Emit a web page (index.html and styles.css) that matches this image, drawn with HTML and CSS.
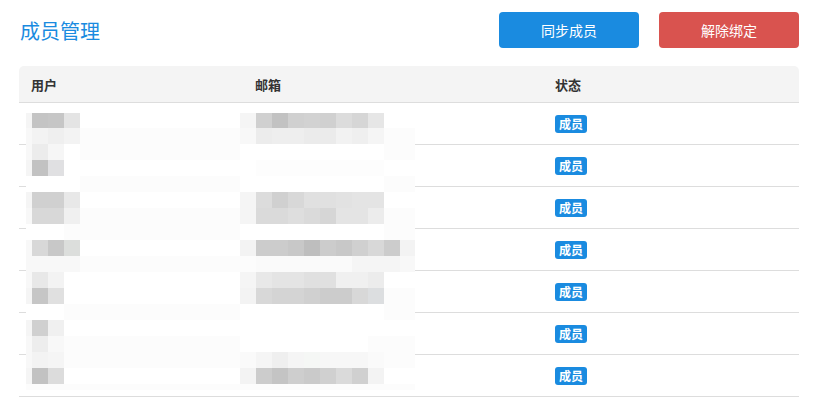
FILE: index.html
```html
<!DOCTYPE html>
<html lang="zh-CN">
<head>
    <meta charset="UTF-8">
    <meta name="viewport" content="width=device-width, initial-scale=1.0">
    <title>成员管理</title>
    <link rel="stylesheet" href="styles.css">
</head>
<body>
    <div class="page">
        <div class="top-bar">
            <h1 class="title">成员管理</h1>
            <div class="actions">
                <button class="btn btn-sync">同步成员</button>
                <button class="btn btn-unbind">解除绑定</button>
            </div>
        </div>

        <div class="member-table">
            <div class="row head">
                <div class="cell">用户</div>
                <div class="cell">邮箱</div>
                <div class="cell">状态</div>
            </div>
            <div class="row"><div class="cell"></div><div class="cell"></div><div class="cell"><span class="badge">成员</span></div></div>
            <div class="row"><div class="cell"></div><div class="cell"></div><div class="cell"><span class="badge">成员</span></div></div>
            <div class="row"><div class="cell"></div><div class="cell"></div><div class="cell"><span class="badge">成员</span></div></div>
            <div class="row"><div class="cell"></div><div class="cell"></div><div class="cell"><span class="badge">成员</span></div></div>
            <div class="row"><div class="cell"></div><div class="cell"></div><div class="cell"><span class="badge">成员</span></div></div>
            <div class="row"><div class="cell"></div><div class="cell"></div><div class="cell"><span class="badge">成员</span></div></div>
            <div class="row"><div class="cell"></div><div class="cell"></div><div class="cell"><span class="badge">成员</span></div></div>

            <!-- pixelated cover over user names and emails -->
            <svg class="mosaic" width="389" height="277" viewBox="26 113 389 277" shape-rendering="crispEdges">
                <rect x="26" y="113" width="389" height="277" fill="#ffffff"/>
                <!-- row 0 -->
                <rect x="26" y="113" width="6" height="15" fill="#f5f5f5"/>
                <rect x="32" y="113" width="16" height="15" fill="#c4c4c4"/>
                <rect x="48" y="113" width="16" height="15" fill="#c6c6c6"/>
                <rect x="64" y="113" width="16" height="15" fill="#e4e4e4"/>
                <rect x="240" y="113" width="16" height="15" fill="#f5f5f5"/>
                <rect x="256" y="113" width="16" height="15" fill="#d0d0d0"/>
                <rect x="272" y="113" width="16" height="15" fill="#c2c2c2"/>
                <rect x="288" y="113" width="16" height="15" fill="#d0d0d0"/>
                <rect x="304" y="113" width="16" height="15" fill="#d2d2d2"/>
                <rect x="320" y="113" width="16" height="15" fill="#d0d0d0"/>
                <rect x="336" y="113" width="16" height="15" fill="#dcdcdc"/>
                <rect x="352" y="113" width="16" height="15" fill="#d6d6d6"/>
                <rect x="368" y="113" width="16" height="15" fill="#e6e6e6"/>
                <!-- row 1 -->
                <rect x="26" y="128" width="6" height="16" fill="#f8f8f8"/>
                <rect x="32" y="128" width="16" height="16" fill="#f3f3f3"/>
                <rect x="48" y="128" width="16" height="16" fill="#efefef"/>
                <rect x="64" y="128" width="16" height="16" fill="#f3f3f3"/>
                <rect x="80" y="128" width="160" height="16" fill="#fcfcfc"/>
                <rect x="240" y="128" width="16" height="16" fill="#f8f8f8"/>
                <rect x="256" y="128" width="16" height="16" fill="#ececec"/>
                <rect x="272" y="128" width="16" height="16" fill="#eeeeee"/>
                <rect x="288" y="128" width="16" height="16" fill="#eeeeee"/>
                <rect x="304" y="128" width="16" height="16" fill="#ebebeb"/>
                <rect x="320" y="128" width="16" height="16" fill="#ebebeb"/>
                <rect x="336" y="128" width="16" height="16" fill="#f2f2f2"/>
                <rect x="352" y="128" width="16" height="16" fill="#efefef"/>
                <rect x="368" y="128" width="16" height="16" fill="#f5f5f5"/>
                <rect x="384" y="128" width="31" height="16" fill="#fcfcfc"/>
                <!-- row 2 -->
                <rect x="26" y="144" width="6" height="16" fill="#f8f8f8"/>
                <rect x="32" y="144" width="16" height="16" fill="#ececec"/>
                <rect x="48" y="144" width="16" height="16" fill="#f6f6f6"/>
                <rect x="80" y="144" width="160" height="16" fill="#fcfcfc"/>
                <rect x="384" y="144" width="31" height="16" fill="#fcfcfc"/>
                <!-- row 3 -->
                <rect x="26" y="160" width="6" height="16" fill="#f5f5f5"/>
                <rect x="32" y="160" width="16" height="16" fill="#c2c2c2"/>
                <rect x="48" y="160" width="16" height="16" fill="#e0e0e2"/>
                <rect x="256" y="160" width="128" height="16" fill="#fdfdfd"/>
                <!-- row 4 -->
                <rect x="80" y="176" width="160" height="16" fill="#fcfcfc"/>
                <rect x="384" y="176" width="31" height="16" fill="#fcfcfc"/>
                <!-- row 5 -->
                <rect x="26" y="192" width="6" height="16" fill="#f5f5f5"/>
                <rect x="32" y="192" width="16" height="16" fill="#d0d0d0"/>
                <rect x="48" y="192" width="16" height="16" fill="#d0d0d0"/>
                <rect x="64" y="192" width="16" height="16" fill="#e8e8e8"/>
                <rect x="240" y="192" width="16" height="16" fill="#f5f5f5"/>
                <rect x="256" y="192" width="16" height="16" fill="#dcdcdc"/>
                <rect x="272" y="192" width="16" height="16" fill="#d0d0d0"/>
                <rect x="288" y="192" width="16" height="16" fill="#d8d8d8"/>
                <rect x="304" y="192" width="16" height="16" fill="#e0e0e0"/>
                <rect x="320" y="192" width="16" height="16" fill="#e0e0e0"/>
                <rect x="336" y="192" width="16" height="16" fill="#e2e2e2"/>
                <rect x="352" y="192" width="16" height="16" fill="#e4e4e4"/>
                <rect x="368" y="192" width="16" height="16" fill="#e4e4e4"/>
                <!-- row 6 -->
                <rect x="26" y="208" width="6" height="16" fill="#f8f8f8"/>
                <rect x="32" y="208" width="16" height="16" fill="#d8d8d8"/>
                <rect x="48" y="208" width="16" height="16" fill="#d8d8d8"/>
                <rect x="64" y="208" width="16" height="16" fill="#f0f0f0"/>
                <rect x="80" y="208" width="160" height="16" fill="#fcfcfc"/>
                <rect x="240" y="208" width="16" height="16" fill="#f5f5f5"/>
                <rect x="256" y="208" width="16" height="16" fill="#dadada"/>
                <rect x="272" y="208" width="16" height="16" fill="#dadada"/>
                <rect x="288" y="208" width="16" height="16" fill="#dedede"/>
                <rect x="304" y="208" width="16" height="16" fill="#dadada"/>
                <rect x="320" y="208" width="16" height="16" fill="#d6d6d6"/>
                <rect x="336" y="208" width="16" height="16" fill="#e4e4e4"/>
                <rect x="352" y="208" width="16" height="16" fill="#e4e4e4"/>
                <rect x="368" y="208" width="16" height="16" fill="#ececec"/>
                <rect x="384" y="208" width="31" height="16" fill="#fcfcfc"/>
                <!-- row 7 -->
                <rect x="64" y="224" width="176" height="16" fill="#fcfcfc"/>
                <rect x="384" y="224" width="31" height="16" fill="#fcfcfc"/>
                <!-- row 8 -->
                <rect x="26" y="240" width="6" height="16" fill="#f8f8f8"/>
                <rect x="32" y="240" width="16" height="16" fill="#d8d8d8"/>
                <rect x="48" y="240" width="16" height="16" fill="#c8c8c8"/>
                <rect x="64" y="240" width="16" height="16" fill="#dcdedc"/>
                <rect x="240" y="240" width="16" height="16" fill="#f3f3f3"/>
                <rect x="256" y="240" width="16" height="16" fill="#cccccc"/>
                <rect x="272" y="240" width="16" height="16" fill="#cccccc"/>
                <rect x="288" y="240" width="16" height="16" fill="#c8c8c8"/>
                <rect x="304" y="240" width="16" height="16" fill="#bebebe"/>
                <rect x="320" y="240" width="16" height="16" fill="#cccccc"/>
                <rect x="336" y="240" width="16" height="16" fill="#c8c8c8"/>
                <rect x="352" y="240" width="16" height="16" fill="#d0d0d0"/>
                <rect x="368" y="240" width="16" height="16" fill="#d8d8d8"/>
                <rect x="384" y="240" width="16" height="16" fill="#cccccc"/>
                <rect x="400" y="240" width="15" height="16" fill="#f3f3f3"/>
                <!-- row 9 -->
                <rect x="26" y="256" width="54" height="16" fill="#f8f8f8"/>
                <rect x="80" y="256" width="176" height="16" fill="#fcfcfc"/>
                <rect x="256" y="256" width="96" height="16" fill="#fafafa"/>
                <rect x="352" y="256" width="48" height="16" fill="#f5f5f5"/>
                <rect x="400" y="256" width="15" height="16" fill="#f8f8f8"/>
                <!-- row 10 -->
                <rect x="26" y="272" width="6" height="16" fill="#f8f8f8"/>
                <rect x="32" y="272" width="16" height="16" fill="#e8e8e8"/>
                <rect x="48" y="272" width="16" height="16" fill="#f3f3f3"/>
                <rect x="240" y="272" width="16" height="16" fill="#f5f5f5"/>
                <rect x="256" y="272" width="16" height="16" fill="#e8e8e8"/>
                <rect x="272" y="272" width="16" height="16" fill="#e4e4e4"/>
                <rect x="288" y="272" width="16" height="16" fill="#e4e4e4"/>
                <rect x="304" y="272" width="16" height="16" fill="#e0e0e0"/>
                <rect x="320" y="272" width="16" height="16" fill="#e0e0e0"/>
                <rect x="336" y="272" width="16" height="16" fill="#f0f0f0"/>
                <rect x="352" y="272" width="16" height="16" fill="#f0f0f0"/>
                <rect x="368" y="272" width="16" height="16" fill="#ececec"/>
                <!-- row 11 -->
                <rect x="26" y="288" width="6" height="16" fill="#f5f5f5"/>
                <rect x="32" y="288" width="16" height="16" fill="#c6c6c6"/>
                <rect x="48" y="288" width="16" height="16" fill="#e0e0e0"/>
                <rect x="240" y="288" width="16" height="16" fill="#f3f3f3"/>
                <rect x="256" y="288" width="16" height="16" fill="#d8d8d8"/>
                <rect x="272" y="288" width="16" height="16" fill="#d4d4d4"/>
                <rect x="288" y="288" width="16" height="16" fill="#d4d4d4"/>
                <rect x="304" y="288" width="16" height="16" fill="#d0d0d0"/>
                <rect x="320" y="288" width="16" height="16" fill="#cccccc"/>
                <rect x="336" y="288" width="16" height="16" fill="#cccccc"/>
                <rect x="352" y="288" width="16" height="16" fill="#d8d8d8"/>
                <rect x="368" y="288" width="16" height="16" fill="#dcdee0"/>
                <rect x="384" y="288" width="31" height="16" fill="#fcfcfc"/>
                <!-- row 12 -->
                <rect x="64" y="304" width="176" height="16" fill="#fcfcfc"/>
                <rect x="384" y="304" width="31" height="16" fill="#fcfcfc"/>
                <!-- row 13 -->
                <rect x="26" y="320" width="6" height="16" fill="#f5f5f5"/>
                <rect x="32" y="320" width="16" height="16" fill="#d0d0d0"/>
                <rect x="48" y="320" width="16" height="16" fill="#f0f0f0"/>
                <!-- row 14 -->
                <rect x="26" y="336" width="6" height="16" fill="#f8f8f8"/>
                <rect x="32" y="336" width="16" height="16" fill="#ededed"/>
                <rect x="48" y="336" width="16" height="16" fill="#f8f8f8"/>
                <rect x="64" y="336" width="176" height="16" fill="#fcfcfc"/>
                <rect x="368" y="336" width="47" height="16" fill="#fcfcfc"/>
                <!-- row 15 -->
                <rect x="26" y="352" width="6" height="16" fill="#f8f8f8"/>
                <rect x="32" y="352" width="16" height="16" fill="#f3f3f3"/>
                <rect x="48" y="352" width="16" height="16" fill="#f5f5f5"/>
                <rect x="64" y="352" width="176" height="16" fill="#fcfcfc"/>
                <rect x="240" y="352" width="16" height="16" fill="#fafafa"/>
                <rect x="256" y="352" width="16" height="16" fill="#f5f5f5"/>
                <rect x="272" y="352" width="16" height="16" fill="#efefef"/>
                <rect x="288" y="352" width="16" height="16" fill="#f5f5f5"/>
                <rect x="304" y="352" width="16" height="16" fill="#f5f7f5"/>
                <rect x="320" y="352" width="48" height="16" fill="#f7f7f7"/>
                <rect x="368" y="352" width="16" height="16" fill="#fafafa"/>
                <rect x="384" y="352" width="31" height="16" fill="#fcfcfc"/>
                <!-- row 16 -->
                <rect x="26" y="368" width="6" height="16" fill="#f5f5f5"/>
                <rect x="32" y="368" width="16" height="16" fill="#c2c2c2"/>
                <rect x="48" y="368" width="16" height="16" fill="#dcdcdc"/>
                <rect x="240" y="368" width="16" height="16" fill="#f3f3f3"/>
                <rect x="256" y="368" width="16" height="16" fill="#cccccc"/>
                <rect x="272" y="368" width="16" height="16" fill="#c4c4c4"/>
                <rect x="288" y="368" width="16" height="16" fill="#cecece"/>
                <rect x="304" y="368" width="16" height="16" fill="#cacaca"/>
                <rect x="320" y="368" width="16" height="16" fill="#d0d0d0"/>
                <rect x="336" y="368" width="16" height="16" fill="#dadada"/>
                <rect x="352" y="368" width="16" height="16" fill="#d0d0d0"/>
                <rect x="368" y="368" width="16" height="16" fill="#f3f3f3"/>
                <!-- row 17 -->
                <rect x="26" y="384" width="389" height="6" fill="#fcfcfc"/>
            </svg>
        </div>
    </div>
</body>
</html>
```

FILE: styles.css
```css
body {
    margin: 0;
    background-color: #ffffff;
    font-family: "Noto Sans CJK SC", "Noto Sans", sans-serif;
    color: #333333;
}
.page {
    padding: 12px 20px 0 19px;
}
.top-bar {
    display: flex;
    justify-content: space-between;
    align-items: center;
    height: 36px;
}
.title {
    margin: 0 0 0 1px;
    font-size: 20px;
    font-weight: normal;
    color: #1a8be0;
}
.actions {
    display: flex;
    gap: 20px;
}
.btn {
    width: 140px;
    height: 36px;
    border: none;
    border-radius: 4px;
    color: #ffffff;
    font-family: inherit;
    font-size: 14px;
}
.btn-sync {
    background-color: #1a8be0;
}
.btn-unbind {
    background-color: #d9534f;
}
.member-table {
    position: relative;
    margin-top: 18px;
}
.row {
    display: grid;
    grid-template-columns: 224px 300px 256px;
    align-items: center;
    height: 42px;
    box-sizing: border-box;
    border-bottom: 1px solid #dddddd;
}
.row.head {
    height: 37px;
    background-color: #f4f4f4;
    border-radius: 5px 5px 0 0;
    font-size: 13px;
    font-weight: bold;
}
.cell {
    display: flex;
    align-items: center;
    padding: 0 12px;
}
.badge {
    height: 18px;
    line-height: 18px;
    padding: 0 4px;
    border-radius: 3px;
    background-color: #1a8be0;
    color: #ffffff;
    font-size: 12px;
    font-weight: bold;
}
.mosaic {
    position: absolute;
    top: 47px;
    left: 7px;
    display: block;
}
```
